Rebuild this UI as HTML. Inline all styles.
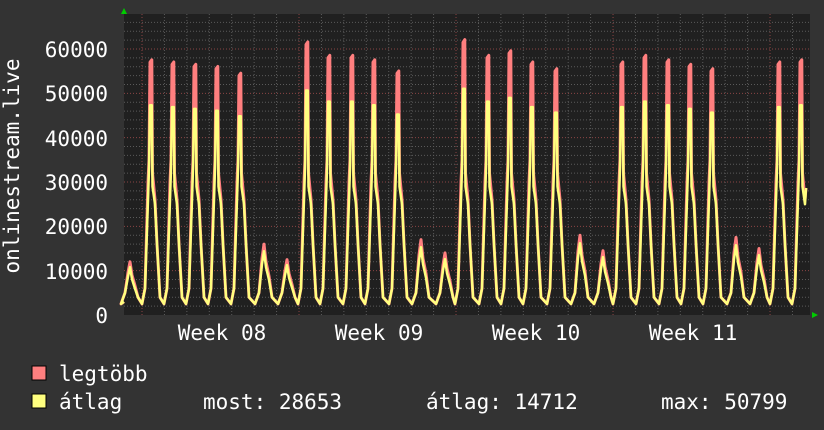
<!DOCTYPE html>
<html><head><meta charset="utf-8"><style>
body{margin:0;background:#333;width:824px;height:430px;overflow:hidden}
svg{display:block}
text{font-family:"DejaVu Sans Mono","Liberation Mono",monospace;fill:#fff;font-size:21px}
</style></head><body>
<svg id="g" width="824" height="430" xmlns="http://www.w3.org/2000/svg">
<rect width="824" height="430" fill="#333"/>
<rect x="124" y="14" width="686" height="301" fill="#202020"/>
<g id="grid"></g>
<g id="data"></g>
<text x="108" y="57" text-anchor="end">60000</text>
<text x="108" y="101" text-anchor="end">50000</text>
<text x="108" y="146" text-anchor="end">40000</text>
<text x="108" y="190" text-anchor="end">30000</text>
<text x="108" y="234" text-anchor="end">20000</text>
<text x="108" y="279" text-anchor="end">10000</text>
<text x="108" y="323" text-anchor="end">0</text>
<text transform="translate(19,166) rotate(-90)" text-anchor="middle" font-size="20">onlinestream.live</text>
<text x="222" y="340" text-anchor="middle">Week 08</text>
<text x="379" y="340" text-anchor="middle">Week 09</text>
<text x="536" y="340" text-anchor="middle">Week 10</text>
<text x="693" y="340" text-anchor="middle">Week 11</text>
<polygon points="121,14 127,14 124,8" fill="#0c0"/>
<polygon points="812,312 812,318 818,315" fill="#0c0"/>
<rect x="32" y="366" width="14" height="14" fill="#ff7f7f" stroke="#000" stroke-width="1"/>
<rect x="32" y="394" width="14" height="14" fill="#ffff7f" stroke="#000" stroke-width="1"/>
<text x="59" y="381">legtöbb</text>
<text x="59" y="409">átlag</text>
<text x="203" y="409">most: 28653</text>
<text x="426" y="409">átlag: 14712</text>
<text x="661" y="409">max: 50799</text>
</svg>
<script>
const y=v=>315-v*266/60000;
let g=document.getElementById('grid'),s='';
for(let v=2000;v<=66000;v+=2000){const yy=y(v);if(yy<14)break;const maj=v%10000==0;
s+=`<line x1="124" x2="810" y1="${yy}" y2="${yy}" stroke="${maj?'#8a4444':'#5a5a5a'}" stroke-dasharray="1,2"/>`;}
for(let i=-1;i<31;i++){const x=142+i*22.43;if(x<124||x>810)continue;const maj=i%7==0;
s+=`<line x1="${x}" x2="${x}" y1="14" y2="315" stroke="${maj?'#8a4444':'#5a5a5a'}" stroke-dasharray="1,2"/>`;}
g.innerHTML=s;
const cx=[130,151,173,195,217,240,264,287,307,329,352,374,398,421,445,464,488,510,532,556,580,603,622,645,668,690,712,736,759,779,801];
const mx=[12000,57000,56500,56000,55500,54000,16000,12500,61000,58000,58000,57000,54500,17000,14000,61500,58000,59000,56500,55000,18000,14500,56500,58000,57000,56000,55000,17500,15000,56500,57000];
function line(isMax){let p=[[124,3000]];
cx.forEach((c,i)=>{const m=mx[i],big=m>30000;const pk=isMax?m:(big?m*0.83:m*0.9);
if(big){p.push([c-9,2500],[c-6,6000],[c-3,isMax?30000:26000],[c-2,isMax?35000:33000],[c-1,pk],[c+0.8,pk*(isMax?1.01:1)],[c+1.5,isMax?32000:29000],[c+4,isMax?26000:25000],[c+6,16000],[c+9,4000]);}
else{p.push([c-9,2500],[c-5,5000],[c-2,pk*0.8],[c,pk],[c+2,pk*0.75],[c+5,pk*0.55],[c+8,4000]);}});
p=p.filter(q=>q[0]<=805);p.push([806,28653]);
return p.map(q=>q[0].toFixed(1)+','+y(q[1]).toFixed(1)).join(' ');}
document.getElementById('data').innerHTML=
`<polyline points="${line(true)}" fill="none" stroke="#ff7f7f" stroke-width="3" stroke-linejoin="round"/>`+
`<polyline points="${line(false)}" fill="none" stroke="#ffff7f" stroke-width="2.5" stroke-linejoin="round"/>`;
</script>
</body></html>
